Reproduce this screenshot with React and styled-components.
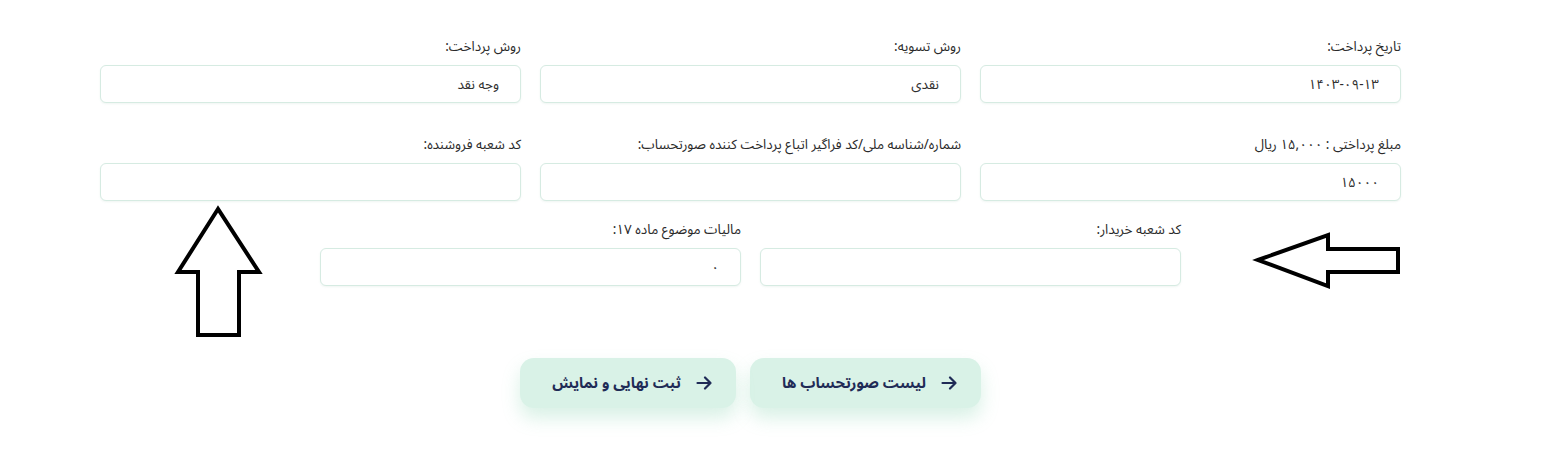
import React from "react";
import styled, { createGlobalStyle } from "styled-components";

const Global = createGlobalStyle`
  html, body { margin: 0; padding: 0; background: #ffffff; }
  body { font-family: "Noto Sans Arabic", "Vazirmatn", "DejaVu Sans", sans-serif; }
  * { box-sizing: border-box; }
`;

const Page = styled.div`
  position: relative;
  width: 1544px;
  height: 464px;
  padding: 37px 143px 0 100px;
  direction: rtl;
`;

const Grid = styled.div`
  display: grid;
  grid-template-columns: repeat(3, 421px);
  column-gap: 19px;
  row-gap: 32px;
`;

const CenterRow = styled.div`
  display: flex;
  justify-content: center;
  gap: 19px;
  margin-top: ${(p) => p.$top}px;
`;

const Field = styled.div`
  display: flex;
  flex-direction: column;
  width: 421px;
`;

const Label = styled.label`
  height: 20px;
  line-height: 20px;
  font-size: 13.5px;
  color: #2a2a2a;
  margin-bottom: 8px;
  white-space: nowrap;
`;

const Input = styled.div`
  height: 38px;
  border: 1px solid #d6ebe2;
  border-radius: 6px;
  background: #fff;
  padding: 0 21px;
  display: flex;
  align-items: center;
  font-size: 13.5px;
  color: #2e2e2e;
  box-shadow: 0 1px 2px rgba(120, 170, 150, 0.12);
`;

const Actions = styled.div`
  display: flex;
  justify-content: center;
  gap: 14px;
  margin-top: 72px;
`;

const Button = styled.button`
  height: 50px;
  border: none;
  border-radius: 14px;
  background: #d9f2e7;
  padding: 0 24px 0 32px;
  display: flex;
  align-items: center;
  gap: 15px;
  font-family: inherit;
  font-size: 15px;
  font-weight: 700;
  color: #1f2b56;
  direction: rtl;
  box-shadow: 0 10px 18px rgba(120, 205, 165, 0.28);
  cursor: pointer;
`;

const ArrowIcon = styled.svg`
  width: 16px;
  height: 14px;
  flex: none;
`;

const Overlay = styled.svg`
  position: absolute;
  left: 0;
  top: 0;
  pointer-events: none;
`;

function Arrow() {
  return (
    <ArrowIcon viewBox="0 0 16 14" fill="none" stroke="#1f2b56" strokeWidth="2.2" strokeLinecap="round" strokeLinejoin="round">
      <path d="M1.5 7h13M9 1.5L14.5 7 9 12.5" />
    </ArrowIcon>
  );
}

function F({ label, value }) {
  return (
    <Field>
      <Label>{label}</Label>
      <Input>{value}</Input>
    </Field>
  );
}

export default function App() {
  return (
    <>
      <Global />
      <Page>
        <Grid>
          <F label="تاریخ پرداخت:" value="۱۴۰۳-۰۹-۱۳" />
          <F label="روش تسویه:" value="نقدی" />
          <F label="روش پرداخت:" value="وجه نقد" />
          <F label="مبلغ پرداختی : ۱۵,۰۰۰ ریال" value="۱۵۰۰۰" />
          <F label="شماره/شناسه ملی/کد فراگیر اتباع پرداخت کننده صورتحساب:" value="" />
          <F label="کد شعبه فروشنده:" value="" />
        </Grid>
        <CenterRow $top={19}>
          <F label="کد شعبه خریدار:" value="" />
          <F label="مالیات موضوع ماده ۱۷:" value="۰" />
        </CenterRow>
        <Actions>
          <Button>
            <Arrow />
            لیست صورتحساب ها
          </Button>
          <Button>
            <Arrow />
            ثبت نهایی و نمایش
          </Button>
        </Actions>
        <Overlay width="1544" height="464" viewBox="0 0 1544 464">
          <polygon
            points="218,209 178,272 198,272 198,335 239,335 239,272 259,272"
            fill="#fff"
            stroke="#000"
            strokeWidth="4"
            strokeLinejoin="miter"
          />
          <polygon
            points="1258,260 1328,235 1328,249 1398,249 1398,272 1328,272 1328,286"
            fill="#fff"
            stroke="#000"
            strokeWidth="4"
            strokeLinejoin="miter"
          />
        </Overlay>
      </Page>
    </>
  );
}
